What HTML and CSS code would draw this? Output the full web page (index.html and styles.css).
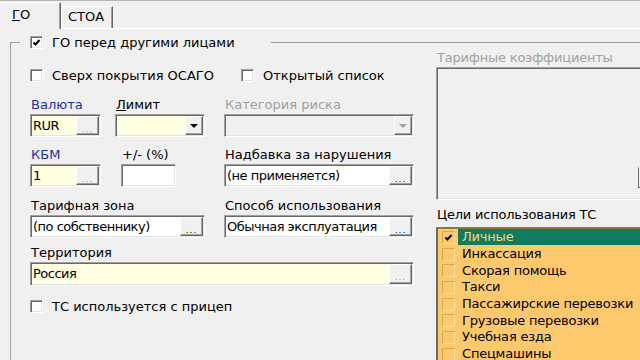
FILE: index.html
```html
<!DOCTYPE html>
<html>
<head>
    <meta charset='utf-8'>
    <title>ГО</title>
    <link rel="stylesheet" href="styles.css">
</head>
<body>
    <div class="tabs">
        <div class="tab active"><span class="ul">Г</span>О</div>
        <div class="tab">СТОА</div>
    </div>
    <div class="panel">
    <fieldset class="group">
        <legend class="legend">
            <label class="check"><span class="box"><svg viewBox="0 0 9 9"><path d="M1.5 4.5 L3.5 6.5 L7.5 2"/></svg></span>ГО перед другими лицами</label>
        </legend>
        <div class="cols">
            <div class="left">
                <div class="checkrow">
                    <label class="check wide"><span class="box"></span>Сверх покрытия ОСАГО</label>
                    <label class="check"><span class="box"></span>Открытый список</label>
                </div>

                <div class="grid row3">
                    <div class="cell">
                        <p class="lbl blue">Валюта</p>
                        <div class="field yellow w71"><span class="val">RUR</span><span class="btn off">...</span></div>
                    </div>
                    <div class="cell">
                        <p class="lbl"><span class="ul">Л</span>имит</p>
                        <div class="field yellow w90"><span class="val"></span><span class="arrow"><i class="tri"></i></span></div>
                    </div>
                    <div class="cell">
                        <p class="lbl gray">Категория риска</p>
                        <div class="field w190 dis"><span class="val"></span><span class="arrow"><i class="tri grey"></i></span></div>
                    </div>
                </div>

                <div class="grid row4">
                    <div class="cell">
                        <p class="lbl blue">КБМ</p>
                        <div class="field yellow w71"><span class="val">1</span><span class="btn off">...</span></div>
                    </div>
                    <div class="cell shift">
                        <p class="lbl">+/- (%)</p>
                        <div class="field w55"><span class="val"></span></div>
                    </div>
                    <div class="cell">
                        <p class="lbl">Надбавка за нарушения</p>
                        <div class="field w190"><span class="val">(не применяется)</span><span class="btn">...</span></div>
                    </div>
                </div>

                <div class="grid row5">
                    <div class="cell span2">
                        <p class="lbl">Тарифная зона</p>
                        <div class="field w175"><span class="val">(по собственнику)</span><span class="btn">...</span></div>
                    </div>
                    <div class="cell">
                        <p class="lbl">Способ использования</p>
                        <div class="field w190"><span class="val">Обычная эксплуатация</span><span class="btn">...</span></div>
                    </div>
                </div>

                <div class="row6">
                    <p class="lbl">Территория</p>
                    <div class="field yellow w384 tall"><span class="val">Россия</span><span class="btn off">...</span></div>
                </div>

                <div class="checkrow last">
                    <label class="check"><span class="box"></span>ТС используется с прицеп</label>
                </div>
            </div>

            <div class="right">
                <p class="lbl gray">Тарифные коэффициенты</p>
                <div class="coef"><span class="minibtn"></span></div>
                <p class="lbl list-title">Цели использования ТС</p>
                <div class="list">
                    <div class="item sel"><span class="ibox"><svg viewBox="0 0 9 9"><path d="M1.5 4.5 L3.5 6.5 L7.5 2"/></svg></span><span class="itxt">Личные</span></div>
                    <div class="item"><span class="ibox"></span><span class="itxt">Инкассация</span></div>
                    <div class="item"><span class="ibox"></span><span class="itxt">Скорая помощь</span></div>
                    <div class="item"><span class="ibox"></span><span class="itxt">Такси</span></div>
                    <div class="item"><span class="ibox"></span><span class="itxt">Пассажирские перевозки</span></div>
                    <div class="item"><span class="ibox"></span><span class="itxt">Грузовые перевозки</span></div>
                    <div class="item"><span class="ibox"></span><span class="itxt">Учебная езда</span></div>
                    <div class="item"><span class="ibox"></span><span class="itxt">Спецмашины</span></div>
                </div>
            </div>
        </div>
    </fieldset>
    </div>
</body>
</html>
```

FILE: styles.css
```css
*{
    margin: 0;
    box-sizing: border-box;
}
body{
    width: 640px;
    height: 360px;
    overflow: hidden;
    background-color: #f0f0f0;
    font-family: "DejaVu Sans", sans-serif;
    font-size: 13px;
    color: #000;
}
.ul{
    text-decoration: underline;
}

/* tabs */
.tabs{
    display: flex;
    align-items: flex-end;
    height: 29px;
    border-top: 1px solid #b4b4b4;
    padding-top: 1px;
    border-bottom: 1px solid #fff;
}
.tab{
    width: 52px;
    height: 22px;
    padding-left: 6px;
    line-height: 20px;
    border-top: 1px solid #fff;
    border-left: 1px solid #fff;
    border-right: 1px solid #696969;
    box-shadow: inset -1px 0 #a0a0a0;
}
.tab.active{
    width: 61px;
    height: 27px;
    padding-left: 12px;
    line-height: 24px;
    margin-bottom: -1px;
    background-color: #f0f0f0;
    border-left: none;
}

/* group box */
.panel{
    padding-top: 5px;
    height: 331px;
    overflow: hidden;
}
.group{
    margin-left: 10px;
    padding: 0 0 0 19px;
    min-width: 0;
    height: 326px;
    border: none;
    border-top: 1px solid #a0a0a0;
    border-left: 1px solid #a0a0a0;
}
.legend{
    width: 251px;
    height: 16px;
    margin-left: -10px;
    padding-left: 10px;
    background-color: #f0f0f0;
}
.check{
    display: flex;
    align-items: center;
    height: 16px;
    white-space: nowrap;
}
.box{
    width: 13px;
    height: 13px;
    margin-right: 9px;
    background-color: #fff;
    border: 1px solid;
    border-color: #a0a0a0 #fff #fff #a0a0a0;
    box-shadow: inset 1px 1px #696969, inset -1px -1px #e3e3e3;
    display: flex;
    align-items: center;
    justify-content: center;
}
.box svg, .ibox svg{
    width: 9px;
    height: 9px;
}
.box path, .ibox path{
    fill: none;
    stroke: #000;
    stroke-width: 2;
}

.cols{
    display: flex;
    gap: 22px;
}
.left{
    width: 384px;
    flex: none;
}
.checkrow{
    display: flex;
    margin-top: 17px;
}
.check.wide{
    width: 211px;
}
.checkrow.last{
    margin-top: 12px;
}

.grid{
    display: grid;
    grid-template-columns: 85px 109px 190px;
}
.row3{ margin-top: 14px; }
.row4{ margin-top: 10px; }
.row5{ margin-top: 11px; }
.row6{ margin-top: 7px; }
.span2{
    grid-column: span 2;
}
.shift{
    padding-left: 6px;
}
.lbl{
    height: 17px;
    line-height: 16px;
    padding-left: 1px;
    white-space: nowrap;
}
.blue{ color: #1c2fa8; }
.gray{ color: #a0a0a0; }

/* edit fields */
.field{
    display: flex;
    height: 23px;
    background-color: #fff;
    border: 1px solid;
    border-color: #a0a0a0 #fff #fff #a0a0a0;
    box-shadow: inset 1px 1px #696969, inset -1px -1px #e3e3e3;
    padding: 1px;
}
.field.tall{ height: 24px; }
.yellow{ background-color: #ffffe1; }
.dis{ background-color: #f0f0f0; }
.w55{ width: 55px; }
.w71{ width: 71px; }
.w90{ width: 90px; }
.w175{ width: 175px; }
.w190{ width: 190px; }
.w384{ width: 384px; }
.val{
    flex: 1;
    padding-left: 1px;
    line-height: 19px;
    letter-spacing: -0.5px;
    white-space: nowrap;
    overflow: hidden;
}
.btn{
    width: 23px;
    flex: none;
    background-color: #f0f0f0;
    border: 1px solid;
    border-color: #fff #696969 #696969 #fff;
    box-shadow: inset -1px -1px #a0a0a0;
    font-size: 9px;
    line-height: 24px;
    text-align: center;
    letter-spacing: 1px;
    overflow: hidden;
}
.btn.off{ color: #a0a0a0; }
.arrow{
    width: 18px;
    flex: none;
    background-color: #f0f0f0;
    border: 1px solid;
    border-color: #fff #696969 #696969 #fff;
    box-shadow: inset -1px -1px #a0a0a0;
    display: flex;
    align-items: center;
    justify-content: center;
}
.tri{
    width: 0;
    height: 0;
    border-left: 4px solid transparent;
    border-right: 4px solid transparent;
    border-top: 4px solid #000;
}
.tri.grey{ border-top-color: #a0a0a0; }

/* right column */
.right{
    width: 230px;
    flex: none;
    letter-spacing: -0.2px;
}
.coef{
    height: 133px;
    border: 1px solid;
    border-color: #a0a0a0 #fff #fff #a0a0a0;
    box-shadow: inset 1px 1px #696969, inset -1px -1px #e3e3e3;
    display: flex;
    align-items: flex-end;
    justify-content: flex-end;
    padding: 0 7px 11px 0;
}
.minibtn{
    width: 20px;
    height: 21px;
    border: 1px solid;
    border-color: #fff #696969 #696969 #696969;
}
.list-title{
    margin-top: 7px;
    margin-bottom: 3px;
}
.list{
    height: 140px;
    background-color: #fdc96c;
    border-top: 2px solid #8a7a3a;
    border-left: 2px solid #6f6f50;
}
.item{
    display: flex;
    align-items: center;
    height: 16.7px;
    padding-left: 4px;
}
.ibox{
    width: 13px;
    height: 13px;
    border: 1px solid;
    border-color: #d9a94f #fbe0a8 #fbe0a8 #d9a94f;
    display: flex;
    align-items: center;
    justify-content: center;
}
.itxt{
    margin-left: 3px;
    padding-left: 4px;
    line-height: 16px;
    white-space: nowrap;
    flex: 1;
}
.sel .itxt{
    background-color: #0f7b5f;
    color: #ffd47a;
}
```
